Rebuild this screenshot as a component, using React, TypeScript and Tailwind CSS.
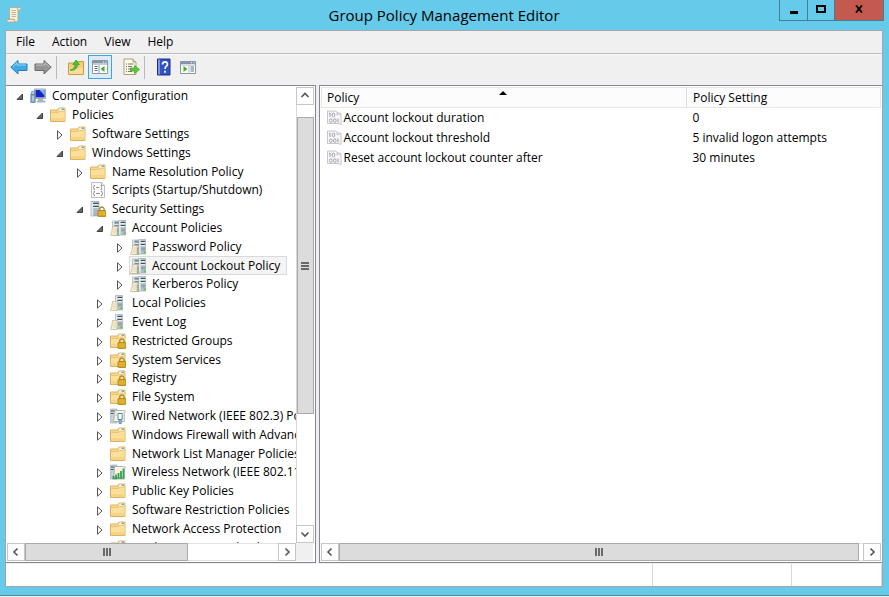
import { useState } from "react";
import type { ReactNode } from "react";
import clsx from "clsx";

type IconName =
  | "computer"
  | "folder"
  | "script"
  | "security"
  | "servers"
  | "server"
  | "lockedFolder"
  | "wired"
  | "wireless";

interface TreeNode {
  label: string;
  level: number;
  icon: IconName;
  state?: "open" | "closed";
}

const nodes: TreeNode[] = [
  { label: "Computer Configuration", level: 0, icon: "computer", state: "open" },
  { label: "Policies", level: 1, icon: "folder", state: "open" },
  { label: "Software Settings", level: 2, icon: "folder", state: "closed" },
  { label: "Windows Settings", level: 2, icon: "folder", state: "open" },
  { label: "Name Resolution Policy", level: 3, icon: "folder", state: "closed" },
  { label: "Scripts (Startup/Shutdown)", level: 3, icon: "script" },
  { label: "Security Settings", level: 3, icon: "security", state: "open" },
  { label: "Account Policies", level: 4, icon: "servers", state: "open" },
  { label: "Password Policy", level: 5, icon: "servers", state: "closed" },
  { label: "Account Lockout Policy", level: 5, icon: "servers", state: "closed" },
  { label: "Kerberos Policy", level: 5, icon: "servers", state: "closed" },
  { label: "Local Policies", level: 4, icon: "server", state: "closed" },
  { label: "Event Log", level: 4, icon: "server", state: "closed" },
  { label: "Restricted Groups", level: 4, icon: "lockedFolder", state: "closed" },
  { label: "System Services", level: 4, icon: "lockedFolder", state: "closed" },
  { label: "Registry", level: 4, icon: "lockedFolder", state: "closed" },
  { label: "File System", level: 4, icon: "lockedFolder", state: "closed" },
  { label: "Wired Network (IEEE 802.3) Policies", level: 4, icon: "wired", state: "closed" },
  { label: "Windows Firewall with Advanced Security", level: 4, icon: "folder", state: "closed" },
  { label: "Network List Manager Policies", level: 4, icon: "folder" },
  { label: "Wireless Network (IEEE 802.11) Policies", level: 4, icon: "wireless", state: "closed" },
  { label: "Public Key Policies", level: 4, icon: "folder", state: "closed" },
  { label: "Software Restriction Policies", level: 4, icon: "folder", state: "closed" },
  { label: "Network Access Protection", level: 4, icon: "folder", state: "closed" },
  { label: "Application Control Policies", level: 4, icon: "folder", state: "closed" },
];

const policies = [
  { name: "Account lockout duration", setting: "0" },
  { name: "Account lockout threshold", setting: "5 invalid logon attempts" },
  { name: "Reset account lockout counter after", setting: "30 minutes" },
];

const indents = ["pl-2", "pl-7", "pl-12", "pl-17", "pl-22", "pl-27"];

const Svg = ({ children }: { children: ReactNode }) => (
  <svg viewBox="0 0 16 16" className="size-4 shrink-0" aria-hidden="true">
    {children}
  </svg>
);

const FolderShape = () => (
  <>
    <path d="M.5 3h7.500l.8-2h6.200v13.500H.5z" fill="#f7d78e" stroke="#dcb360" />
    <path d="M9.200 1.500h5v2.500h-5z" fill="#fdf5dc" />
    <path d="M11.500 1.500h2.500V3h-2.500z" fill="#6fa8d6" />
    <path d="M1 5.500h7.500l1.200-1.300h4.800V14H1z" fill="#fbdf9b" />
    <path d="M1 5.500h7.500l1.200-1.300h4.800" fill="none" stroke="#e2bd6c" strokeWidth="0.800" />
    <path d="M1 11h13.500v3H1z" fill="#f6d487" />
  </>
);

const LockShape = () => (
  <>
    <path d="M9.700 10V8.200a2.200 2.200 0 0 1 4.400 0V10" fill="none" stroke="#ab8a3a" strokeWidth="1.300" />
    <rect x="8" y="9.500" width="7.800" height="6" rx="0.600" fill="#dba520" stroke="#a2720e" strokeWidth="0.700" />
    <path d="M8.600 11.200h6.600M8.600 13.200h6.600" stroke="#f0c448" strokeWidth="0.700" />
  </>
);

const TowerShape = ({ x, y }: { x: number; y: number }) => (
  <g transform={`translate(${x} ${y})`}>
    <path d="M0 0h7v14.500H0z" fill="#b4c0c8" stroke="#97a4ad" strokeWidth="0.600" />
    <path d="M.3.300h1.700V14.200H.3z" fill="#e1e8ec" />
    <path d="M2 2h4.500M2 5h4.500" stroke="#3f4f5b" strokeWidth="1.100" />
    <path d="M2 3.200h4.500M2 6.200h4.500" stroke="#f4f7f8" />
    <path d="M2.400 8h4.200v3H2.400z" fill="#93a4af" />
    <path d="M5 12h1.800v1.800H5z" fill="#45d321" />
  </g>
);

const ScrollShape = () => (
  <>
    <path
      d="M2.500 6.500h5.200c-.7.700-.7 1.500-.7 2.700V15.500H.7c-.8-.8-.3-2 .8-2z"
      fill="#f8f0d4"
      stroke="#bcb08a"
      strokeWidth="0.700"
    />
    <path d="M3.300 9h2.700M3.200 11h2.700M3 13h2.700" stroke="#d3c79f" strokeWidth="0.700" />
  </>
);

const NodeIcon = ({ name }: { name: IconName }) => {
  switch (name) {
    case "computer":
      return (
        <Svg>
          <path d="M4.500 1h11v9.500h-11z" fill="#cfd9e3" stroke="#8b9bab" strokeWidth="0.800" />
          <path d="M5.500 2h9V9.400h-9z" fill="#1526c4" />
          <path d="M9.500 2h5v5.500z" fill="#7fb1f5" />
          <path d="M8 10.500h5v2h2.500V14.500H6.700v-2H8z" fill="#a7b3be" />
          <path d="M.8 6h4.400v8.500H.8z" fill="#82a6bd" stroke="#5f8096" strokeWidth="0.700" />
          <circle cx="3" cy="4.800" r="1.800" fill="#b7ccd9" stroke="#56778d" strokeWidth="0.600" />
          <path d="M3 8v5" stroke="#d9e8f0" />
        </Svg>
      );
    case "folder":
      return (
        <Svg>
          <FolderShape />
        </Svg>
      );
    case "lockedFolder":
      return (
        <Svg>
          <FolderShape />
          <LockShape />
        </Svg>
      );
    case "script":
      return (
        <Svg>
          <path d="M1.500.5h10l3 3v12h-13z" fill="#fdfdfd" stroke="#a9abad" strokeWidth="0.800" />
          <path d="M11.500.5v3h3" fill="#e3e4e5" stroke="#a9abad" strokeWidth="0.800" />
          <path
            d="M5 3.500H4V5l-.7.500L4 6v1.500h1M10.500 3.500h1V5l.7.500-.7.500v1.500h-1M5 9.500H4V11l-.7.500.7.500v1.500h1M11 9.500h1V11l.7.500-.7.500v1.500h-1M6 5.500h3.500M6 11.500h4"
            fill="none"
            stroke="#85898d"
            strokeWidth="0.900"
          />
        </Svg>
      );
    case "security":
      return (
        <Svg>
          <path d="M1 .5h8V15H1z" fill="#a9b7c0" stroke="#8c9aa4" strokeWidth="0.600" />
          <path d="M1.300.800h2V14.700h-2z" fill="#e1e8ec" />
          <path d="M3 2.500h5.500M3 5.500h5.500" stroke="#3d4e5c" strokeWidth="1.100" />
          <path d="M3 3.700h5.500M3 6.700h5.500" stroke="#f4f7f8" />
          <LockShape />
        </Svg>
      );
    case "servers":
      return (
        <Svg>
          <TowerShape x={2.500} y={1} />
          <TowerShape x={8.700} y={0.500} />
          <ScrollShape />
        </Svg>
      );
    case "server":
      return (
        <Svg>
          <TowerShape x={5.500} y={0.500} />
          <ScrollShape />
        </Svg>
      );
    case "wired":
      return (
        <Svg>
          <path d="M.5 1h6.500v14H.5z" fill="#c9d3da" stroke="#93a1ab" strokeWidth="0.600" />
          <path d="M1 3h3.500M1 5.500h2.500" stroke="#42525f" />
          <path d="M4.500 2.500h10c1.200 0 1.300 2-.2 2V13.500H3.500c-1-.5-.7-1.500.5-1.700z" fill="#f7f3e2" stroke="#9c9c94" strokeWidth="0.700" />
          <path d="M5.500 5h2M5.500 7.500h1.500" stroke="#bbb" strokeWidth="0.800" />
          <path d="M8 5.500h4.200v6H8z" fill="#fff" stroke="#4a8bb8" />
          <path d="M9 11.500h2.300V15.500H9z" fill="#8fc1e3" stroke="#377cab" strokeWidth="0.700" />
        </Svg>
      );
    case "wireless":
      return (
        <Svg>
          <path d="M.5 1h6.500v14H.5z" fill="#c9d3da" stroke="#93a1ab" strokeWidth="0.600" />
          <path d="M1 3h3.500M1 5.500h2.500" stroke="#42525f" />
          <path d="M4.500 2.500h10c1.200 0 1.300 2-.2 2V13.500H3.500c-1-.5-.7-1.500.5-1.700z" fill="#f7f3e2" stroke="#9c9c94" strokeWidth="0.700" />
          <path d="M3.500 14.500v-2.500M6 14.500v-4M8.500 14.500V9M11 14.500V7M13.500 14.500V4.500" stroke="#32a050" strokeWidth="1.800" />
          <path d="M2.500 14.800h12" stroke="#247a3a" strokeWidth="0.800" />
        </Svg>
      );
  }
};

const PolicyIcon = () => (
  <Svg>
    <path d="M.5 1H9l1 1.500 4 1V14.500L11 13.500H.5z" fill="#f8f8fa" stroke="#b7b7bf" strokeWidth="0.800" />
    <path d="M10 2.500v2.500l4-1.500" fill="none" stroke="#b7b7bf" strokeWidth="0.800" />
    <path d="M3 3v4M2 3.500l1-.5M11 8.500v4" stroke="#8f8f9e" strokeWidth="0.900" fill="none" />
    <ellipse cx="6.500" cy="5" rx="1.300" ry="1.900" fill="none" stroke="#8f8f9e" strokeWidth="0.800" />
    <ellipse cx="3.800" cy="10.600" rx="1.300" ry="1.900" fill="none" stroke="#8f8f9e" strokeWidth="0.800" />
    <ellipse cx="7.800" cy="10.600" rx="1.300" ry="1.900" fill="none" stroke="#8f8f9e" strokeWidth="0.800" />
  </Svg>
);

const Twisty = ({ open }: { open: boolean }) => (
  <svg viewBox="0 0 10 10" className="mt-[2px] size-[10px]" aria-hidden="true">
    {open ? (
      <path d="M7.500 2v5.500H2z" fill="#666" stroke="#333" strokeWidth="0.900" />
    ) : (
      <path d="M2.500.800v8.400L7 5z" fill="#fff" stroke="#555" />
    )}
  </svg>
);

const chevrons = {
  up: "M1.500 6L5 2.500 8.500 6",
  down: "M1.500 3.500L5 7l3.500-3.500",
  left: "M6.500 1.500L3 5l3.500 3.500",
  right: "M3.500 1.500L7 5 3.500 8.500",
};

const ScrollButton = ({ dir }: { dir: keyof typeof chevrons }) => (
  <button
    aria-label={`Scroll ${dir}`}
    className="grid size-[18px] shrink-0 place-items-center border border-[#c6c6c6] bg-white"
  >
    <svg viewBox="0 0 10 10" className="size-[10px]" aria-hidden="true">
      <path d={chevrons[dir]} fill="none" stroke="#555" strokeWidth="1.600" />
    </svg>
  </button>
);

const Grip = ({ vertical }: { vertical?: boolean }) => (
  <span className={clsx("flex gap-px", vertical && "flex-col")}>
    {[0, 1, 2].map((i) => (
      <span key={i} className={clsx("bg-[#6a6a6a]", vertical ? "h-[2px] w-2" : "h-2 w-[2px]")} />
    ))}
  </span>
);

const Tree = () => {
  const [selected, setSelected] = useState("Account Lockout Policy");

  return (
    <ul className="grid h-[470px] auto-rows-fr" aria-label="Console tree">
      {nodes.map((node) => (
        <li key={node.label} className={clsx("flex items-center", indents[node.level])}>
          <span className="flex w-[14px] shrink-0">
            {node.state && (
              <button aria-label={`Toggle ${node.label}`}>
                <Twisty open={node.state === "open"} />
              </button>
            )}
          </span>
          <button
            onClick={() => setSelected(node.label)}
            className={clsx(
              "flex h-[19px] items-center gap-[6px] border pr-[6px] whitespace-nowrap",
              selected === node.label ? "border-[#dadada] bg-[#f4f4f4]" : "border-transparent",
            )}
          >
            <NodeIcon name={node.icon} />
            {node.label}
          </button>
        </li>
      ))}
    </ul>
  );
};

const PolicyTable = () => (
  <table className="w-full table-fixed border-collapse text-left">
    <thead>
      <tr className="h-5 border border-[#e6e6e6] bg-[#fcfcfc]">
        <th className="relative w-[365px] border-r border-[#dedede] pl-[5px] font-normal">
          Policy
          <svg viewBox="0 0 8 4" className="absolute top-[3px] left-[177px] h-1 w-2" aria-hidden="true">
            <path d="M0 4l4-4 4 4z" fill="#000" />
          </svg>
        </th>
        <th className="pl-[6px] font-normal">Policy Setting</th>
      </tr>
    </thead>
    <tbody>
      {policies.map((policy) => (
        <tr key={policy.name} className="h-5">
          <td className="pl-[5px]">
            <span className="flex items-center gap-px">
              <PolicyIcon />
              {policy.name}
            </span>
          </td>
          <td className="pl-[6px]">{policy.setting}</td>
        </tr>
      ))}
    </tbody>
  </table>
);

const ToolButton = ({ label, active, children }: { label: string; active?: boolean; children: ReactNode }) => (
  <button
    aria-label={label}
    className={clsx(
      "grid size-6 place-items-center border",
      active ? "border-[#3fa7e0] bg-[#dcebf5]" : "border-transparent",
    )}
  >
    <svg viewBox="0 0 18 18" className="size-[18px]" aria-hidden="true">
      {children}
    </svg>
  </button>
);

const Separator = () => <span className="mr-[7px] ml-px h-[23px] w-px bg-[#b9b9b9]" />;

const Toolbar = () => (
  <div className="flex h-[31px] items-center border-t border-[#f9f9f9] bg-[#f0f0f0] px-px pb-[6px]">
    <ToolButton label="Back">
      <path d="M.8 9.200L8 2.500V6h9v6.500H8V16z" fill="#3fa9e6" stroke="#2a7db8" />
      <path d="M2.500 8.900L7 4.800V7h9" fill="none" stroke="#9bdcfa" />
    </ToolButton>
    <ToolButton label="Forward">
      <path d="M17.200 9.200L10 2.500V6H1v6.500h9V16z" fill="#949494" stroke="#6b6b6b" />
      <path d="M2 7h9V4.800L15.500 8.900" fill="none" stroke="#c4c4c4" />
    </ToolButton>
    <Separator />
    <ToolButton label="Up one level">
      <path d="M1.500 5h6L9 3.500h7.500V16.500h-15z" fill="#f2ce7b" stroke="#c99b41" />
      <path d="M2 10h14v6H2z" fill="#f8dc97" />
      <path d="M3 12c3.500-.5 5-2.500 5-5.500H5.800L9 2l3.500 4.500h-2C10.500 10.500 7.500 13 3 12z" fill="#4cc62e" stroke="#2f8f1c" strokeWidth="0.600" />
    </ToolButton>
    <ToolButton label="Show/Hide Console Tree" active>
      <path d="M1.500 2.500h15v13h-15z" fill="#fff" stroke="#8a97a5" />
      <path d="M1.500 2.500h15v3h-15z" fill="#8796a6" />
      <path d="M12 4h1M14.500 4h1" stroke="#fff" />
      <path d="M2 6.500h14" stroke="#c4ccd3" />
      <path d="M3.500 8.500h3M3.500 10.500h3M3.500 12.500h3" stroke="#4b6f95" />
      <path d="M8 7v8.500" stroke="#8a97a5" />
      <path d="M13.500 8v6L9.500 11z" fill="#39b31e" />
    </ToolButton>
    <span className="w-[7px]" />
    <ToolButton label="Export List">
      <path d="M2 1h9l3 3v12.500H2z" fill="#fdf8e3" stroke="#a9a07f" />
      <path d="M11 1v3h3" fill="#e8dfba" stroke="#a9a07f" />
      <path d="M4 6h1M6 6h5.500M4 8.500h1M6 8.500h4M4 11h1M6 11h3M4 13.500h1M6 13.500h4" stroke="#777" />
      <path d="M8.500 10h4V7.500l5 4-5 4V13h-4z" fill="#5ccb35" stroke="#3a9a20" strokeWidth="0.700" />
    </ToolButton>
    <Separator />
    <ToolButton label="Help">
      <path d="M2.500 1H15v16H2.500z" fill="#3352c4" stroke="#1c2f86" />
      <path d="M3 1.500h2v15H3z" fill="#7f95e3" />
      <path d="M7.500 6.500c0-3.500 5-3.300 5-.3 0 2-2.500 2-2.500 4.800M10 12.700v2" fill="none" stroke="#fff" strokeWidth="1.700" />
    </ToolButton>
    <ToolButton label="Show/Hide Action Pane">
      <path d="M1.500 3.500h15v12h-15z" fill="#fff" stroke="#8a97a5" />
      <path d="M1.500 3.500h15v2.500h-15z" fill="#8796a6" />
      <path d="M12 4.700h1M14.500 4.700h1" stroke="#fff" />
      <path d="M2 7h14M10 7v8.500" stroke="#b2bcc5" />
      <path d="M11.500 9h3.500M11.500 11h3.500M11.500 13h3.500" stroke="#4b6f95" />
      <path d="M4.500 8v6l4-3z" fill="#39b31e" />
    </ToolButton>
  </div>
);

const TitleBar = () => (
  <header className="flex h-[30px] items-start justify-between pr-[5px]">
    <svg viewBox="0 0 16 16" className="mt-[7px] ml-[6px] size-4" aria-hidden="true">
      <path d="M4 .5h9.500c1.500 0 1.800 2 .3 2.500H12v9.500c0 1.500-1 2.500-2.500 2.500H2c-1.500-.3-1.500-2.500 0-2.700h1.500V2z" fill="#f6eedb" stroke="#b3a582" strokeWidth="0.800" />
      <path d="M12 3c-1-.8-.8-2 0-2.500M2 12.300h6.500c-.6 1.200.2 2.500 1.200 2.600" fill="none" stroke="#a4946a" strokeWidth="0.800" />
      <path d="M5.500 3.500h4.500M5.500 5.500h4.500M5.500 7.500h4.500M5.500 9.500h4.500" stroke="#b9ab83" strokeWidth="0.800" />
    </svg>
    <h1 className="flex-1 pt-1 pl-[87px] text-center text-[15px] leading-[22px]">Group Policy Management Editor</h1>
    <div className="flex h-[21px] border border-t-0 border-[#417f95]">
      <button aria-label="Minimize" className="grid w-7 place-items-center border-r border-[#417f95]">
        <span className="mt-1 h-[3px] w-2 bg-black" />
      </button>
      <button aria-label="Maximize" className="grid w-[27px] place-items-center border-r border-[#417f95]">
        <span className="mb-[2px] h-2 w-[10px] border-2 border-black" />
      </button>
      <button aria-label="Close" className="grid w-12 place-items-center bg-[#c4594f]">
        <svg viewBox="0 0 8 8" className="mb-[2px] size-2" aria-hidden="true">
          <path d="M1 .5l6 7M7 .5l-6 7" stroke="#000" strokeWidth="1.900" />
        </svg>
      </button>
    </div>
  </header>
);

export default function App() {
  return (
    <div className="flex h-screen flex-col overflow-hidden bg-[#66cbea] font-['Open_Sans','Noto_Sans',sans-serif] text-[12px] leading-4 text-black">
      <TitleBar />

      <main className="mr-[6px] mb-2 ml-[5px] flex min-h-0 flex-1 flex-col border border-[#a5a5a5] bg-[#f0f0f0]">
        <nav className="flex h-[23px] items-center gap-[17px] border-b border-[#bdbdbd] px-[10px]">
          <button>File</button>
          <button>Action</button>
          <button>View</button>
          <button>Help</button>
        </nav>
        <Toolbar />

        <div className="flex min-h-0 flex-1 gap-[3px]">
          {/* Console tree */}
          <section className="flex w-[310px] shrink-0 flex-col border border-l-0 border-[#828790] bg-white p-px pr-[2px]">
            <div className="flex min-h-0 flex-1">
              <div className="min-w-0 flex-1 overflow-hidden">
                <Tree />
              </div>
              <div className="flex w-[17px] flex-col items-center border-l border-[#d9d9d9]">
                <ScrollButton dir="up" />
                <div className="flex min-h-0 flex-1 flex-col pt-3">
                  <div className="grid h-[297px] w-[17px] place-items-center border border-[#a9a9a9] bg-[#dcdcdc]">
                    <Grip vertical />
                  </div>
                </div>
                <ScrollButton dir="down" />
              </div>
            </div>
            <div className="flex h-[18px]">
              <ScrollButton dir="left" />
              <div className="flex-1 border-y border-[#e3e3e3]">
                <div className="-my-px grid h-[18px] w-[163px] place-items-center border border-[#a9a9a9] bg-[#dcdcdc]">
                  <Grip />
                </div>
              </div>
              <ScrollButton dir="right" />
              <div className="w-[17px] bg-[#f0f0f0]" />
            </div>
          </section>

          {/* Policies of the selected node */}
          <section className="flex min-w-0 flex-1 flex-col border border-r-0 border-[#828790] bg-white p-px">
            <div className="min-h-0 flex-1">
              <PolicyTable />
            </div>
            <div className="flex h-[18px]">
              <ScrollButton dir="left" />
              <div className="flex-1 border-y border-[#e3e3e3] pr-1">
                <div className="-my-px grid h-[18px] place-items-center border border-[#a9a9a9] bg-[#dcdcdc]">
                  <Grip />
                </div>
              </div>
              <ScrollButton dir="right" />
            </div>
          </section>
        </div>

        {/* Status bar */}
        <footer className="mt-px flex h-[22px] justify-end bg-white">
          <span className="w-[139px] border-l border-[#d7d7d7]" />
          <span className="w-[91px] border-x border-[#d7d7d7]" />
        </footer>
      </main>

      <div className="h-[2px] shrink-0 border-t border-[#4c8ba0] bg-[#f4f4f4]" />
    </div>
  );
}
